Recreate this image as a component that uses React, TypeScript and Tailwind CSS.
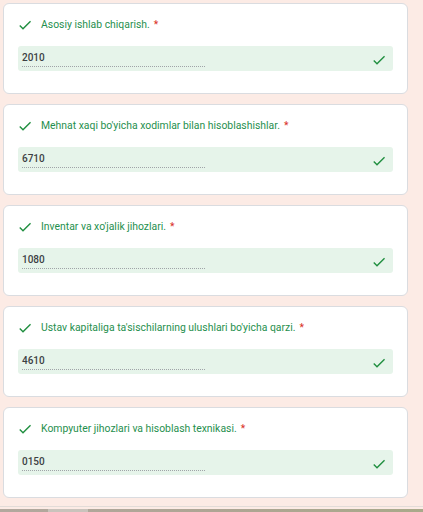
const items = [
  { title: 'Asosiy ishlab chiqarish.', value: '2010' },
  { title: "Mehnat xaqi bo'yicha xodimlar bilan hisoblashishlar.", value: '6710' },
  { title: "Inventar va xo'jalik jihozlari.", value: '1080' },
  { title: "Ustav kapitaliga ta'sischilarning ulushlari bo'yicha qarzi.", value: '4610' },
  { title: 'Kompyuter jihozlari va hisoblash texnikasi.', value: '0150' },
];

function Check({ className = '' }: { className?: string }) {
  return (
    <svg viewBox="0 0 24 24" width="16" height="16" className={className}>
      <path d="M9 16.17L4.83 12l-1.42 1.41L9 19 21 7l-1.41-1.41z" fill="#1e8e3e" />
    </svg>
  );
}

function QuestionCard({ title, value }: { title: string; value: string }) {
  return (
    <div className="h-[91px] w-[405px] rounded-[6px] border border-[#dadce0] bg-white px-[14px] pt-[13px]">
      <div className="flex h-[16px] items-center">
        <Check className="-ml-[1px] shrink-0" />
        <span className="ml-[8px] text-[10.4px] leading-[16px] text-[#1f8f4e]">
          {title}
          <span className="ml-[4px] text-[#d93025]">*</span>
        </span>
      </div>
      <div className="mt-[13px] flex h-[25px] items-start justify-between rounded-[3px] bg-[#e6f4ea] pl-[4px] pr-[6px]">
        <div className="w-[183px] border-b border-dotted border-[#a0a4a8] pt-[5px] pb-[2px] text-[10px] leading-[13px] font-medium text-[#3c4043]">
          {value}
        </div>
        <Check className="mt-[6px] shrink-0" />
      </div>
    </div>
  );
}

export default function App() {
  return (
    <div className="flex h-[512px] w-[423px] flex-col overflow-hidden bg-[#fcebe5] font-['Roboto',sans-serif]">
      <div className="flex flex-col gap-[10px] pl-[3px] pt-[3px]">
        {items.map((it) => (
          <QuestionCard key={it.value} title={it.title} value={it.value} />
        ))}
      </div>
      <div className="flex-1" />
      <div className="h-[3px] border-t border-[#e2dcd8]" />
      <div className="flex h-[3px] bg-gradient-to-r from-[#b2a89e] via-[#aea594] to-[#a9a98a]">
        <div className="ml-[48px] w-[40px] bg-[#c9c3bc]" />
      </div>
    </div>
  );
}
